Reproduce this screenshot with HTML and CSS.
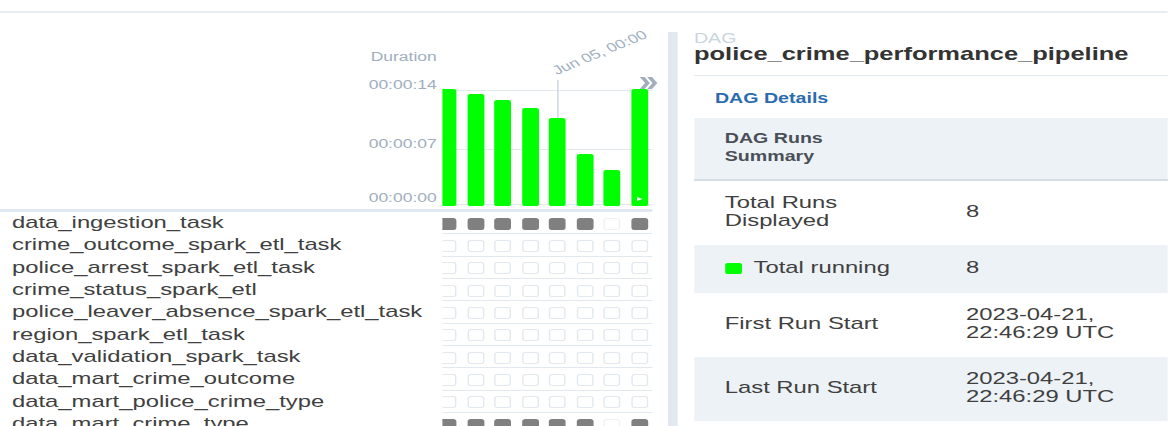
FILE: index.html
```html
<!DOCTYPE html>
<html lang="en">
<head>
<meta charset="utf-8">
<title>police_crime_performance_pipeline - Grid</title>
<link rel="stylesheet" href="styles.css">
</head>
<body>
<div class="page">
  <div class="topbar"></div>
  <main class="main">
    <section class="grid-panel">
      <div class="chart">
        <div class="axis">
          <span class="axis-title">Duration</span>
          <span class="tick tick-14">00:00:14</span>
          <span class="tick tick-07">00:00:07</span>
          <span class="tick tick-00">00:00:00</span>
        </div>
        <div class="plot">
          <div class="clip">
            <div class="cols">
              <div class="run"><div class="bar" style="height:117px"></div></div>
              <div class="run"><div class="bar" style="height:112px"></div></div>
              <div class="run"><div class="bar" style="height:106px"></div></div>
              <div class="run"><div class="bar" style="height:98px"></div></div>
              <div class="run">
                <span class="marker"></span>
                <div class="bar" style="height:88px"></div>
              </div>
              <div class="run"><div class="bar" style="height:52px"></div></div>
              <div class="run"><div class="bar" style="height:36px"></div></div>
              <div class="run"><div class="bar" style="height:117px"><svg class="play" viewBox="0 0 4 4"><polygon points="0,0 4,2 0,4" fill="#fff"/></svg></div></div>
            </div>
          </div>
          <span class="marker-label">Jun 05, 00:00</span>
          <button class="more" aria-label="Load more runs">
            <svg viewBox="4 5 16.5 14" preserveAspectRatio="none"><path d="M15.5 5H11l5 7-5 7h4.5l5-7z"/><path d="M8.5 5H4l5 7-5 7h4.5l5-7z"/></svg>
          </button>
        </div>
      </div>
      <div class="tasks">
        <div class="task">
          <span class="task-name">data_ingestion_task</span>
          <div class="cells"><div class="cols">
            <span class="cell"><span class="box queued"></span></span><span class="cell"><span class="box queued"></span></span><span class="cell"><span class="box queued"></span></span><span class="cell"><span class="box queued"></span></span><span class="cell"><span class="box queued"></span></span><span class="cell"><span class="box queued"></span></span><span class="cell"><span class="box blank"></span></span><span class="cell"><span class="box queued"></span></span>
          </div></div>
        </div>
        <div class="task">
          <span class="task-name">crime_outcome_spark_etl_task</span>
          <div class="cells"><div class="cols">
            <span class="cell"><span class="box"></span></span><span class="cell"><span class="box"></span></span><span class="cell"><span class="box"></span></span><span class="cell"><span class="box"></span></span><span class="cell"><span class="box"></span></span><span class="cell"><span class="box"></span></span><span class="cell"><span class="box"></span></span><span class="cell"><span class="box"></span></span>
          </div></div>
        </div>
        <div class="task">
          <span class="task-name">police_arrest_spark_etl_task</span>
          <div class="cells"><div class="cols">
            <span class="cell"><span class="box"></span></span><span class="cell"><span class="box"></span></span><span class="cell"><span class="box"></span></span><span class="cell"><span class="box"></span></span><span class="cell"><span class="box"></span></span><span class="cell"><span class="box"></span></span><span class="cell"><span class="box"></span></span><span class="cell"><span class="box"></span></span>
          </div></div>
        </div>
        <div class="task">
          <span class="task-name">crime_status_spark_etl</span>
          <div class="cells"><div class="cols">
            <span class="cell"><span class="box"></span></span><span class="cell"><span class="box"></span></span><span class="cell"><span class="box"></span></span><span class="cell"><span class="box"></span></span><span class="cell"><span class="box"></span></span><span class="cell"><span class="box"></span></span><span class="cell"><span class="box"></span></span><span class="cell"><span class="box"></span></span>
          </div></div>
        </div>
        <div class="task">
          <span class="task-name">police_leaver_absence_spark_etl_task</span>
          <div class="cells"><div class="cols">
            <span class="cell"><span class="box"></span></span><span class="cell"><span class="box"></span></span><span class="cell"><span class="box"></span></span><span class="cell"><span class="box"></span></span><span class="cell"><span class="box"></span></span><span class="cell"><span class="box"></span></span><span class="cell"><span class="box"></span></span><span class="cell"><span class="box"></span></span>
          </div></div>
        </div>
        <div class="task">
          <span class="task-name">region_spark_etl_task</span>
          <div class="cells"><div class="cols">
            <span class="cell"><span class="box"></span></span><span class="cell"><span class="box"></span></span><span class="cell"><span class="box"></span></span><span class="cell"><span class="box"></span></span><span class="cell"><span class="box"></span></span><span class="cell"><span class="box"></span></span><span class="cell"><span class="box"></span></span><span class="cell"><span class="box"></span></span>
          </div></div>
        </div>
        <div class="task">
          <span class="task-name">data_validation_spark_task</span>
          <div class="cells"><div class="cols">
            <span class="cell"><span class="box"></span></span><span class="cell"><span class="box"></span></span><span class="cell"><span class="box"></span></span><span class="cell"><span class="box"></span></span><span class="cell"><span class="box"></span></span><span class="cell"><span class="box"></span></span><span class="cell"><span class="box"></span></span><span class="cell"><span class="box"></span></span>
          </div></div>
        </div>
        <div class="task">
          <span class="task-name">data_mart_crime_outcome</span>
          <div class="cells"><div class="cols">
            <span class="cell"><span class="box"></span></span><span class="cell"><span class="box"></span></span><span class="cell"><span class="box"></span></span><span class="cell"><span class="box"></span></span><span class="cell"><span class="box"></span></span><span class="cell"><span class="box"></span></span><span class="cell"><span class="box"></span></span><span class="cell"><span class="box"></span></span>
          </div></div>
        </div>
        <div class="task">
          <span class="task-name">data_mart_police_crime_type</span>
          <div class="cells"><div class="cols">
            <span class="cell"><span class="box"></span></span><span class="cell"><span class="box"></span></span><span class="cell"><span class="box"></span></span><span class="cell"><span class="box"></span></span><span class="cell"><span class="box"></span></span><span class="cell"><span class="box"></span></span><span class="cell"><span class="box"></span></span><span class="cell"><span class="box"></span></span>
          </div></div>
        </div>
        <div class="task">
          <span class="task-name">data_mart_crime_type</span>
          <div class="cells"><div class="cols">
            <span class="cell"><span class="box queued"></span></span><span class="cell"><span class="box queued"></span></span><span class="cell"><span class="box queued"></span></span><span class="cell"><span class="box queued"></span></span><span class="cell"><span class="box queued"></span></span><span class="cell"><span class="box queued"></span></span><span class="cell"><span class="box blank"></span></span><span class="cell"><span class="box queued"></span></span>
          </div></div>
        </div>
      </div>
    </section>
    <div class="divider"></div>
    <aside class="details">
      <div class="dag-kicker">DAG</div>
      <h1 class="dag-title">police_crime_performance_pipeline</h1>
      <div class="tab">DAG Details</div>
      <table class="summary">
        <thead>
          <tr><th colspan="2">DAG Runs<br>Summary</th></tr>
        </thead>
        <tbody>
          <tr>
            <td class="label">Total Runs Displayed</td>
            <td>8</td>
          </tr>
          <tr class="alt single">
            <td class="label"><span class="swatch"></span>Total running</td>
            <td>8</td>
          </tr>
          <tr>
            <td class="label">First Run Start</td>
            <td><span class="val">2023-04-21, 22:46:29 UTC</span></td>
          </tr>
          <tr class="alt">
            <td class="label">Last Run Start</td>
            <td><span class="val">2023-04-21, 22:46:29 UTC</span></td>
          </tr>
        </tbody>
      </table>
    </aside>
  </main>
</div>
</body>
</html>
```

FILE: styles.css
```css
* { box-sizing: border-box; }

html, body {
  margin: 0;
  padding: 0;
  height: 426px;
  overflow: hidden;
  background: #fff;
}

body {
  font-family: "Liberation Sans", Arial, Helvetica, sans-serif;
  color: #404040;
}

/* the whole capture is stretched horizontally */
.page {
  width: 834.3px;
  height: 426px;
  transform: scaleX(1.4);
  transform-origin: 0 0;
  display: flex;
  flex-direction: column;
}

.topbar {
  flex: none;
  height: 13px;
  border-bottom: 2px solid #e8edf2;
}

.main {
  flex: 1;
  min-height: 0;
  display: flex;
  padding-top: 19px;
}

.grid-panel {
  flex: none;
  width: 466.4px;
  margin-right: 11px;
}

.divider {
  flex: none;
  width: 7px;
  background: #e2e8f0;
}

.details {
  flex: 1;
  min-width: 0;
  margin-left: 11.3px;
}

/* ---------- chart ---------- */
.chart {
  display: flex;
  height: 177px;
}

.axis {
  flex: 1;
  display: flex;
  flex-direction: column;
  align-items: flex-end;
  padding-right: 4.4px;
  font-size: 12.5px;
  line-height: 15px;
  color: #a0aec0;
}

.axis-title { margin-top: 18px; }
.tick-14 { margin-top: 13px; }
.tick-07 { margin-top: 44px; }
.tick-00 { margin-top: 39px; }

.plot {
  position: relative;
  flex: none;
  width: 150px;
  background:
    linear-gradient(#e2e8f0, #e2e8f0) 0 58px / 100% 1px no-repeat,
    linear-gradient(#e2e8f0, #e2e8f0) 0 117px / 100% 1px no-repeat,
    linear-gradient(#e2e8f0, #e2e8f0) 0 172px / 100% 1px no-repeat;
}

.clip {
  height: 100%;
  display: flex;
  justify-content: flex-end;
  overflow: hidden;
}

.cols {
  flex: none;
  display: flex;
  height: 100%;
}

.run {
  position: relative;
  width: 19.5px;
  height: 100%;
  display: flex;
  flex-direction: column;
  justify-content: flex-end;
  align-items: center;
  padding-bottom: 3px;
}

.bar {
  position: relative;
  z-index: 1;
  width: 12px;
  background: #00ff00;
  border-radius: 2px;
  display: flex;
  flex-direction: column;
  justify-content: flex-end;
  align-items: center;
}

.play {
  width: 4px;
  height: 4px;
  margin-bottom: 5px;
}

.marker {
  position: absolute;
  left: 9.25px;
  top: 48px;
  bottom: 3px;
  width: 1px;
  background: #cbd5e0;
}

.marker-label {
  position: absolute;
  left: 81.5px;
  top: 32px;
  font-size: 12.5px;
  line-height: 15px;
  color: #a0aec0;
  white-space: nowrap;
  transform: rotate(-30deg);
  transform-origin: 0 11.8px;
}

.more {
  position: absolute;
  left: 140.8px;
  top: 45px;
  width: 12.5px;
  height: 12px;
  padding: 0;
  border: 0;
  background: none;
  display: flex;
}

.more svg {
  width: 12.5px;
  height: 12px;
  fill: #a3aebd;
}

/* ---------- task rows ---------- */
.tasks {
  border-top: 3px solid #e2e8f0;
}

.task {
  display: flex;
  height: 22.33px;
}

.task-name {
  flex: 1;
  padding-left: 8.6px;
  font-size: 17px;
  line-height: 22.33px;
  color: #404040;
  white-space: nowrap;
  overflow: hidden;
}

.cells {
  flex: none;
  width: 150px;
  display: flex;
  justify-content: flex-end;
  overflow: hidden;
  border-bottom: 1px solid #e2e8f0;
  padding-top: 2px;
}

.cells .cols {
  align-items: center;
}

.cell {
  width: 19.5px;
  display: flex;
  justify-content: center;
}

.box {
  width: 12px;
  height: 12px;
  border-radius: 2.5px;
  border: 1px solid #e2e8f0;
  background: #fff;
}

.box.queued {
  background: #808080;
  border-color: #808080;
}

.box.blank {
  border-color: #eef2f6;
}

/* ---------- details ---------- */
.dag-kicker {
  font-size: 14px;
  line-height: 12px;
  color: #cbd5e0;
}

.dag-title {
  margin: 0;
  font-size: 18.2px;
  line-height: 20px;
  font-weight: 700;
  color: #333;
  padding-bottom: 11px;
  border-bottom: 1px solid #e2e8f0;
}

.tab {
  font-size: 14px;
  line-height: 20px;
  font-weight: 700;
  color: #2b6cb0;
  padding: 12px 0 10px 15px;
}

.summary {
  width: 100%;
  border-collapse: collapse;
  font-size: 17px;
  line-height: 18px;
  color: #404040;
}

.summary th {
  text-align: left;
  background: #edf2f7;
  border-bottom: 2px solid #d5dde6;
  padding: 11px 22px 14px;
  font-size: 14px;
  line-height: 18px;
  font-weight: 700;
  color: #4a4f57;
}

.summary td {
  padding: 13px 0 15px;
  vertical-align: middle;
}

.summary td.label {
  box-sizing: content-box;
  width: 150.3px;
  padding-left: 22px;
  padding-right: 22px;
}

.summary tr.alt td {
  background: #edf2f7;
}

.summary tr.single td {
  line-height: 20px;
}

.swatch {
  display: inline-block;
  width: 12px;
  height: 11px;
  border-radius: 2px;
  background: #00ff00;
  margin-right: 8.6px;
  vertical-align: -1px;
}

.val {
  display: inline-block;
  max-width: 120px;
}
```
